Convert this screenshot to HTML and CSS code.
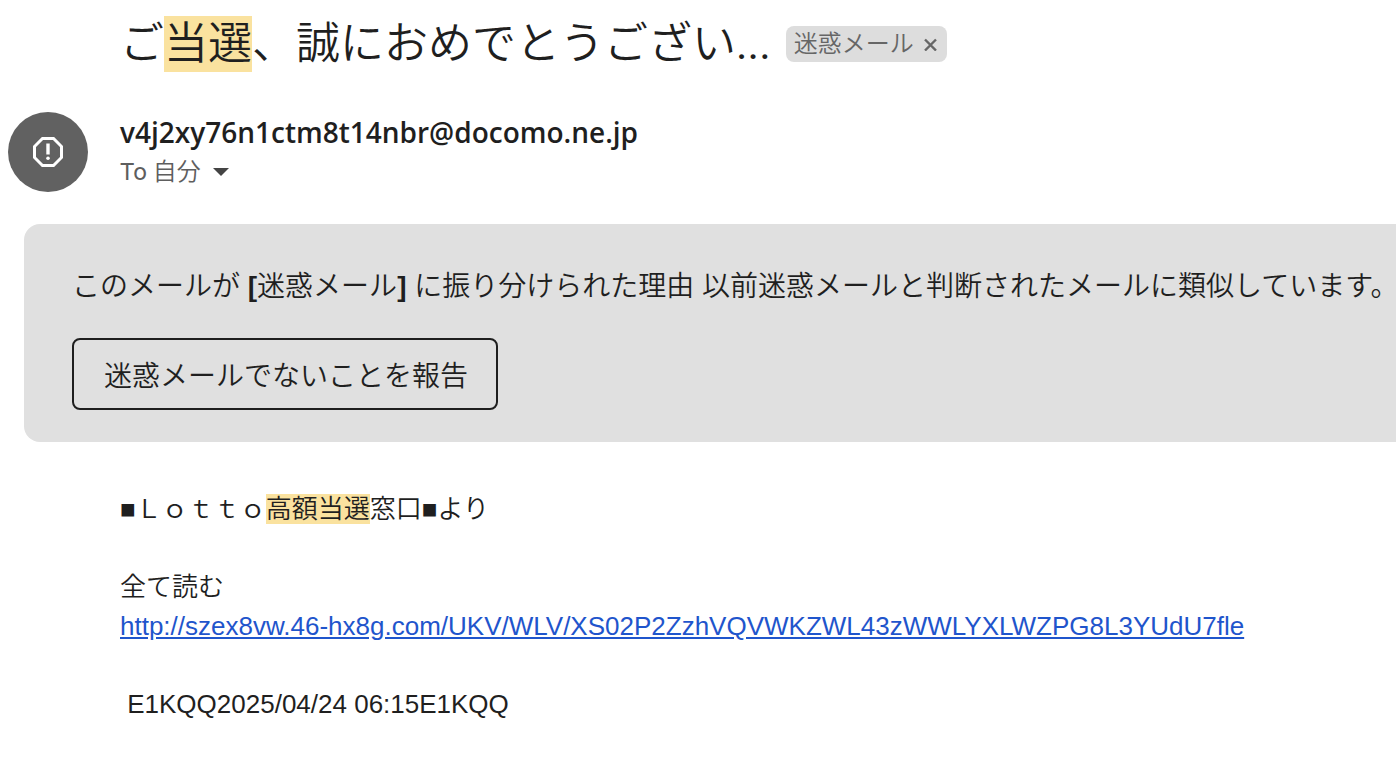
FILE: index.html
```html
<!DOCTYPE html>
<html lang="ja">

<head>
    <meta charset="UTF-8" />
    <meta name="viewport" content="width=device-width, initial-scale=1.0" />
    <title>迷惑メール</title>
    <link rel="stylesheet" href="styles.css">
</head>

<body>
    <header class="subject-row">
        <h1>ご<mark>当選</mark>、誠におめでとうござい<span class="dots">...</span></h1>
        <div class="label">
            <span>迷惑メール</span>
            <button class="label-remove" type="button" aria-label="ラベルを削除">
                <svg viewBox="0 0 14 14" width="14" height="14">
                    <path d="M1 2.5 12 13.5M12 2.5 1 13.5" />
                </svg>
            </button>
        </div>
    </header>

    <section class="sender">
        <div class="avatar">
            <svg viewBox="0 0 32 32" width="32" height="32">
                <path class="octagon" d="M10.5 2.5h11l8 8v11l-8 8h-11l-8-8v-11z" />
                <path class="mark" d="M14.3 7.5h3.4v11h-3.4z" />
                <circle class="mark" cx="16" cy="22.3" r="1.8" />
            </svg>
        </div>
        <div class="sender-info">
            <h2>v4j2xy76n1ctm8t14nbr@docomo.ne.jp</h2>
            <button class="recipient" type="button"><span class="to">To&nbsp;</span>自分 <span class="arrow"></span></button>
        </div>
    </section>

    <section class="notice">
        <p>このメールが <b>[</b>迷惑メール<b>]</b> に振り分けられた理由 以前迷惑メールと判断されたメールに類似しています。</p>
        <button class="report" type="button">迷惑メールでないことを報告</button>
    </section>

    <main class="message">
        <p>■Ｌｏｔｔｏ<mark>高額当選</mark>窓口■より</p>
        <p>全て読む<br><a href="http://szex8vw.46-hx8g.com/UKV/WLV/XS02P2ZzhVQVWKZWL43zWWLYXLWZPG8L3YUdU7fle">http://szex8vw.46-hx8g.com/UKV/WLV/XS02P2ZzhVQVWKZWL43zWWLYXLWZPG8L3YUdU7fle</a></p>
        <p>&nbsp;E1KQQ2025/04/24 06:15E1KQQ</p>
    </main>
</body>

</html>
```
FILE: styles.css
```css
* {
    box-sizing: border-box;
}

body {
    margin: 0;
    background: #fff;
    color: #1f1f1f;
    font-family: "Liberation Sans", "Noto Sans CJK JP", sans-serif;
    overflow-x: hidden;
}

h1,
h2,
p {
    margin: 0;
    font-weight: normal;
}

button {
    font-family: inherit;
    color: inherit;
    cursor: pointer;
}

mark {
    background: #fae29f;
    color: inherit;
}

.subject-row {
    display: flex;
    align-items: center;
    gap: 15px;
    padding: 14px 0 0 120px;
    white-space: nowrap;
}

h1 {
    font-family: Roboto, "Noto Sans CJK JP", sans-serif;
    font-size: 44px;
    font-weight: 350;
    line-height: 60px;
}

h1 mark {
    padding: 2px 0;
}

.dots {
    font-weight: 400;
}

.label {
    display: flex;
    align-items: center;
    gap: 10px;
    height: 36px;
    padding: 0 9px 0 8px;
    border-radius: 8px;
    background: #ddd;
    color: #666;
    font-size: 24px;
    font-weight: 350;
}

.label span {
    line-height: 32px;
}

.label-remove {
    display: flex;
    padding: 0;
    border: 0;
    background: none;
}

.label-remove svg {
    fill: none;
    stroke: #666;
    stroke-width: 2.4;
}

.sender {
    display: flex;
    gap: 32px;
    padding: 38px 8px 0;
}

.avatar {
    display: flex;
    justify-content: center;
    align-items: center;
    width: 80px;
    height: 80px;
    border-radius: 50%;
    background: #616161;
}

.octagon {
    fill: none;
    stroke: #fff;
    stroke-width: 3;
}

.mark {
    fill: #fff;
}

h2 {
    font-family: "Open Sans", sans-serif;
    font-size: 28px;
    font-weight: 600;
    line-height: 40px;
}

.recipient {
    display: flex;
    align-items: center;
    padding: 0;
    border: 0;
    background: none;
    color: #5e5e5e;
    font-family: Roboto, "Noto Sans CJK JP", sans-serif;
    font-size: 24px;
    font-weight: 350;
    line-height: 40px;
}

.to {
    font-weight: 400;
}

.arrow {
    margin-left: 12px;
    border: 8px solid transparent;
    border-top-color: #444;
    border-bottom: 0;
}

.notice {
    margin: 32px 0 0 24px;
    padding: 43px 0 32px 48px;
    border-radius: 16px 0 0 16px;
    background: #e0e0e0;
    font-size: 28px;
    line-height: 40px;
    white-space: nowrap;
}

.notice p {
    font-weight: 350;
}

.report {
    margin-top: 31px;
    padding: 0 28px 0 30px;
    height: 72px;
    border: 2px solid #1f1f1f;
    border-radius: 8px;
    background: none;
    font-size: 28px;
    font-weight: 350;
}

.message {
    padding: 48px 0 0 120px;
    font-size: 26px;
    line-height: 39px;
}

.message p {
    margin-bottom: 39px;
    font-weight: 350;
}

.message a {
    color: #1f55cc;
}
```
